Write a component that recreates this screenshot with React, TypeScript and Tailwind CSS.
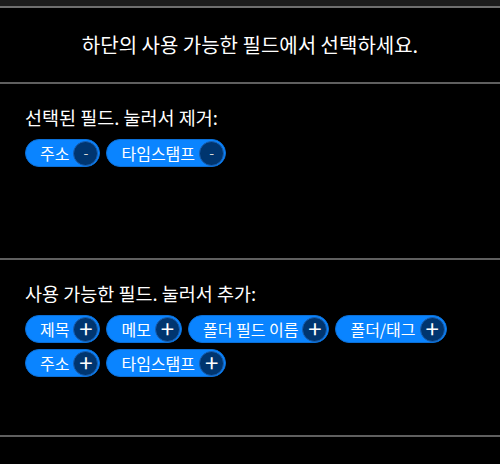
const selected = ["주소", "타임스탬프"];
const available = ["제목", "메모", "폴더 필드 이름", "폴더/태그", "주소", "타임스탬프"];

const Chip = ({ label, sign }: { label: string; sign: "+" | "-" }) => (
  <button className="flex items-center h-[28px] rounded-full bg-[#0a84ff] border border-[#0b6fd6] pl-[14px] pr-[1px] text-white">
    <span className="text-[16px] leading-none">{label}</span>
    <span className="ml-[4px] w-[25px] h-[25px] rounded-full bg-[#00356f] border border-[#1a5fb0] flex items-center justify-center">
      {sign === "+" ? (
        <span className="text-[24px] leading-none -mt-[2px]">+</span>
      ) : (
        <span className="text-[14px] leading-none text-[#d8d8d8] -mt-[2px]">-</span>
      )}
    </span>
  </button>
);

export default function App() {
  return (
    <div
      className="w-[500px] h-[464px] bg-black text-white overflow-hidden"
      style={{ fontFamily: '"Noto Sans CJK KR", "Noto Sans", sans-serif' }}
    >
      <div className="h-[6px] bg-[#1c1c1c]" />
      <div className="h-[76px] border-t-2 border-[#6f6f6f] flex items-center justify-center">
        <p className="text-[20px] leading-[26px]">하단의 사용 가능한 필드에서 선택하세요.</p>
      </div>
      <section className="h-[176px] border-t-2 border-[#5f5f5f] px-[25px] pt-[20px]">
        <p className="text-[18.5px] leading-[26px]">선택된 필드. 눌러서 제거:</p>
        <div className="mt-[9px] flex flex-wrap gap-[6px]">
          {selected.map(f => <Chip key={f} label={f} sign="-" />)}
        </div>
      </section>
      <section className="h-[177px] border-t-2 border-[#5f5f5f] px-[25px] pt-[20px]">
        <p className="text-[18.5px] leading-[26px]">사용 가능한 필드. 눌러서 추가:</p>
        <div className="mt-[9px] flex flex-wrap gap-[6px]">
          {available.map((f, i) => <Chip key={i} label={f} sign="+" />)}
        </div>
      </section>
      <div className="border-t-2 border-[#5f5f5f]" />
    </div>
  );
}
